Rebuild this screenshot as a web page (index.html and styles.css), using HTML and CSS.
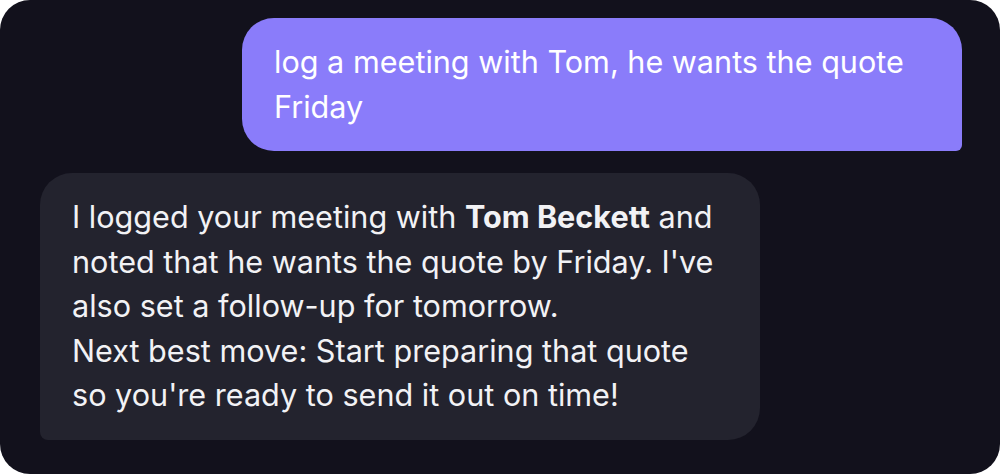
FILE: index.html
```html
<!DOCTYPE html>
<html>
<head>
    <title>Chat</title>
    <link rel="stylesheet" href="styles.css">
</head>
<body>
    <div class="chat">
        <div class="bubble user">
            log a meeting with Tom, he wants the quote Friday
        </div>
        <div class="bubble bot">
            I logged your meeting with <b>Tom Beckett</b> and noted that he wants the quote by Friday. I've also set a follow-up for tomorrow.<br>
            Next best move: Start preparing that quote so you're ready to send it out on time!
        </div>
    </div>
</body>
</html>
```

FILE: styles.css
```css
body {
    margin: 0;
    background-color: #ffffff;
    font-family: Inter, 'Noto Sans', sans-serif;
}
.chat {
    height: 474px;
    box-sizing: border-box;
    background-color: #12111c;
    border-radius: 30px;
    padding: 18px 38px 0 40px;
    display: flex;
    flex-direction: column;
    gap: 22px;
}
.bubble {
    width: 720px;
    box-sizing: border-box;
    padding: 22px 32px;
    font-size: 30.6px;
    line-height: 44.5px;
}
.user {
    align-self: flex-end;
    background-color: #8a7cfa;
    color: #ffffff;
    border-radius: 32px 32px 6px 32px;
}
.bot {
    align-self: flex-start;
    background-color: #23232e;
    color: #f2f2f5;
    border-radius: 32px 32px 32px 8px;
}
.bot b {
    font-weight: 700;
}
```
